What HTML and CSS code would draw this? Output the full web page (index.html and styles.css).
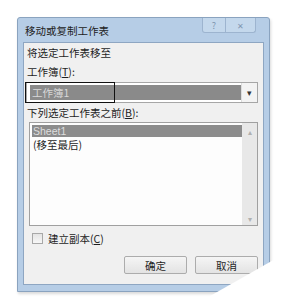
FILE: index.html
```html
<!DOCTYPE html>
<html lang="zh-CN">
<head>
  <meta charset="UTF-8" />
  <title>移动或复制工作表</title>
  <link rel="stylesheet" href="styles.css">
</head>
<body>
  <div class="page">
    <div class="dialog">
      <div class="titlebar">
        <span class="title">移动或复制工作表</span>
        <div class="caption-btns">
          <span class="cap-btn help">?</span>
          <span class="cap-btn close">✕</span>
        </div>
      </div>

      <div class="client">
        <div class="label first">将选定工作表移至</div>
        <div class="label">工作簿(<u>T</u>):</div>

        <div class="combo">
          <div class="combo-value"><span class="focus-box"></span>工作簿1</div>
          <div class="combo-arrow">▾</div>
        </div>

        <div class="label tight">下列选定工作表之前(<u>B</u>):</div>

        <div class="listbox">
          <div class="list-items">
            <div class="item selected">Sheet1</div>
            <div class="item">(移至最后)</div>
          </div>
          <div class="scrollbar">
            <span class="arrow">▴</span>
            <span class="arrow">▾</span>
          </div>
        </div>

        <label class="check-row">
          <span class="checkbox"></span>
          <span>建立副本(<u>C</u>)</span>
        </label>

        <div class="buttons">
          <button class="btn">确定</button>
          <button class="btn">取消</button>
        </div>
      </div>
    </div>
  </div>
  <div class="curl"></div>
</body>
</html>
```

FILE: styles.css
```css
body {
  margin: 0;
  background: #ffffff;
  font-family: "Noto Sans CJK SC", "Liberation Sans", sans-serif;
  font-size: 10.5px;
  color: #1e1e1e;
  width: 284px;
  height: 304px;
  overflow: hidden;
  position: relative;
}

.page {
  padding: 17px 0 0 17px;
}

/* --- window frame --- */
.dialog {
  width: 241px;
  height: 268px;
  background: #b6cde6;
  border: 1px solid #8aa3bf;
  border-radius: 3px 3px 0 0;
  padding: 0 5px 5px 5px;
  box-shadow: 1px 2px 3px rgba(0,0,0,0.15);
}

.titlebar {
  height: 24px;
  display: flex;
  align-items: flex-start;
  justify-content: space-between;
}
.title {
  padding-top: 5px;
  padding-left: 2px;
  color: #222;
}
.caption-btns {
  display: flex;
  margin-right: 8px;
}
.cap-btn {
  height: 14px;
  border: 1px solid #9db4cf;
  border-top: none;
  background: #c4d8ec;
  color: #7f96b0;
  font-size: 9px;
  display: flex;
  align-items: center;
  justify-content: center;
}
.help {
  width: 22px;
  border-radius: 0 0 0 3px;
}
.close {
  width: 29px;
  border-left: none;
  border-radius: 0 0 3px 0;
  font-size: 8px;
}

/* --- client area --- */
.client {
  height: 241px;
  background: #f0f0f0;
  border: 1px solid #8ea6c2;
  padding: 0 5px 0 2px;
  display: flex;
  flex-direction: column;
}

.label {
  height: 14px;
  line-height: 14px;
  padding-left: 1px;
  margin-top: 5px;
}
.label.first {
  margin-top: 3px;
}
.label.tight {
  margin-top: 3px;
}

.combo {
  margin-top: 3px;
  height: 19px;
  border: 1px solid #a6a6a6;
  background: #ffffff;
  display: flex;
  align-items: stretch;
}
.combo-value {
  flex: 1;
  margin: 2px 0 2px 3px;
  background: #8a8a8a;
  color: #d8d8d8;
  line-height: 15px;
  padding-left: 2px;
  position: relative;
}
.focus-box {
  position: absolute;
  left: -5px;
  top: -3px;
  width: 88px;
  height: 19px;
  border: 1px solid #111;
}
.combo-arrow {
  width: 15px;
  display: flex;
  align-items: center;
  justify-content: center;
  background: #f3f3f3;
  border-left: 1px solid #dcdcdc;
  font-size: 9px;
  color: #333;
}

.listbox {
  margin-top: 2px;
  margin-left: 3px;
  height: 102px;
  border: 1px solid #a0a0a0;
  background: #fdfdfd;
  display: flex;
}
.list-items {
  flex: 1;
  padding: 2px 0 0 2px;
}
.item {
  height: 13px;
  line-height: 13px;
  padding-left: 1px;
  width: max-content;
}
.item.selected {
  width: auto;
  height: 12px;
  line-height: 12px;
  margin-bottom: 1px;
  font-family: "Liberation Sans", sans-serif;
  background: #8c8c8c;
  color: #dedede;
}
.scrollbar {
  width: 15px;
  background: #e8e8e8;
  display: flex;
  flex-direction: column;
  justify-content: space-between;
  align-items: center;
  color: #b0b0b0;
  font-size: 8px;
  padding: 3px 0 1px;
}

.check-row {
  display: flex;
  align-items: center;
  gap: 5px;
  margin-top: 5px;
  margin-left: 6px;
  height: 14px;
}
.checkbox {
  width: 9px;
  height: 9px;
  border: 1px solid #a8a8a8;
  background: linear-gradient(#e4e4e4, #f7f7f7);
}

.buttons {
  display: flex;
  justify-content: flex-end;
  gap: 8px;
  margin-top: 11px;
}
.btn {
  width: 63px;
  height: 18px;
  padding: 0;
  border: 1px solid #acacac;
  border-radius: 2px;
  background: linear-gradient(#f5f5f5, #e3e3e3);
  font-family: inherit;
  font-size: 10.5px;
  color: #1e1e1e;
}

/* paper curl in the corner of the photo */
.curl {
  position: absolute;
  left: 0;
  top: 0;
  width: 284px;
  height: 304px;
  background: #ffffff;
  clip-path: polygon(284px 254px, 284px 304px, 196px 304px);
  filter: drop-shadow(0 0 1px #999);
}
```
